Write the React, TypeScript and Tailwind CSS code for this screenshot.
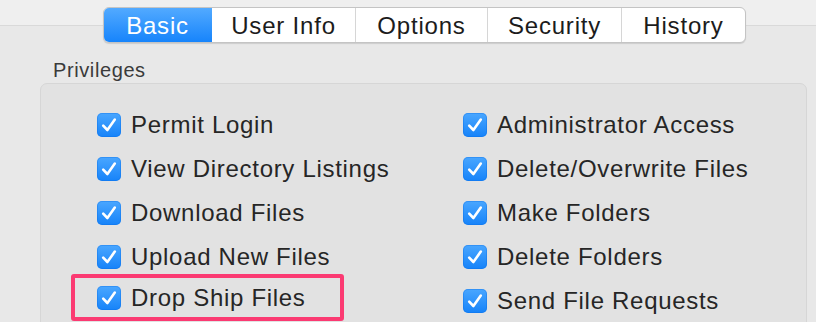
const TABS = [
  { label: "Basic", w: "w-[109px]", active: true },
  { label: "User Info", w: "w-[143px]" },
  { label: "Options", w: "w-[132px]" },
  { label: "Security", w: "w-[134px]" },
  { label: "History", w: "w-[124px]" },
]

const LEFT = [
  "Permit Login",
  "View Directory Listings",
  "Download Files",
  "Upload New Files",
  "Drop Ship Files",
]

const RIGHT = [
  "Administrator Access",
  "Delete/Overwrite Files",
  "Make Folders",
  "Delete Folders",
  "Send File Requests",
]

const Check = () => (
  <span className="flex h-[24px] w-[24px] shrink-0 items-center justify-center rounded-[5px] bg-[linear-gradient(to_bottom,#4aa7ff,#1683f9)] shadow-[inset_0_0_0_1px_rgba(10,110,230,0.35)]">
    <svg width="24" height="24" viewBox="0 0 24 24" fill="none">
      <path
        d="M6.2 12.6 L10.4 17 L17.8 6.6"
        stroke="white"
        strokeWidth="2.6"
        strokeLinecap="round"
        strokeLinejoin="round"
      />
    </svg>
  </span>
)

const Row = ({ label, marked }: { label: string; marked?: boolean }) => (
  <div className="flex h-[44px] items-center">
    <div
      className={
        marked
          ? "-ml-[26px] mb-[7px] flex h-[47px] w-[273px] items-center gap-[10px] rounded-[3px] border-[4px] border-[#fb3a72] pl-[22px]"
          : "flex items-center gap-[10px]"
      }
    >
      <Check />
      <span className="text-[24px] leading-none tracking-[0.7px] text-[#262626]">
        {label}
      </span>
    </div>
  </div>
)

export default function App() {
  return (
    <div
      className="h-[322px] w-[816px] overflow-hidden bg-[linear-gradient(to_bottom,#efefef_0px,#efefef_25px,#d9d9d9_25px,#d9d9d9_26px,#e8e8e8_26px)]"
      style={{ fontFamily: '"Liberation Sans", Arial, sans-serif' }}
    >
      <div className="ml-[103px] mt-[7px] flex h-[36px] w-[643px] overflow-hidden rounded-[6px] border border-[#c4c4c4] bg-white shadow-[0_1px_1px_rgba(0,0,0,0.12)]">
        {TABS.map((t, i) =>
          t.active ? (
            <div
              key={t.label}
              className={`${t.w} -my-px -ml-px flex items-center justify-center rounded-l-[6px] bg-[linear-gradient(to_bottom,#54abff,#1583fb)] pt-[1px] text-[24px] tracking-[0.8px] text-white`}
            >
              {t.label}
            </div>
          ) : (
            <div
              key={t.label}
              className={`${t.w} flex items-center justify-center pt-[1px] text-[24px] tracking-[0.8px] text-[#1c1c1c] ${
                i > 1 ? "border-l border-[#d6d6d6]" : ""
              }`}
            >
              {t.label}
            </div>
          )
        )}
      </div>

      <div className="ml-[53px] mt-[15px] h-[24px] text-[20px] leading-[24px] tracking-[0.6px] text-[#3a3a3a]">
        Privileges
      </div>

      <div className="ml-[40px] mt-[1px] h-[260px] w-[767px] rounded-[7px] border border-[#d6d6d6] bg-[#e2e2e2] pl-[56px] pt-[19px]">
        <div className="grid grid-cols-[366px_1fr]">
          <div className="flex flex-col">
            {LEFT.map((l) => (
              <Row key={l} label={l} marked={l === "Drop Ship Files"} />
            ))}
          </div>
          <div className="flex flex-col">
            {RIGHT.map((l) => (
              <Row key={l} label={l} />
            ))}
          </div>
        </div>
      </div>
    </div>
  )
}
